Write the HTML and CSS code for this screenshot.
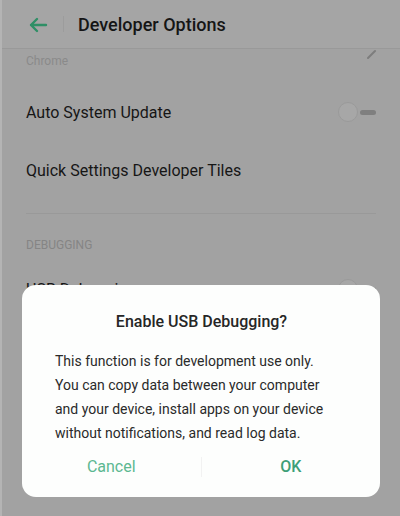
FILE: index.html
```html
<!DOCTYPE html>
<html lang="en">
<head>
    <meta charset="UTF-8">
    <meta name="viewport" content="width=device-width, initial-scale=1.0">
    <title>Developer Options</title>
    <link rel="stylesheet" href="styles.css">
</head>
<body>

    <div class="screen">

        <!-- Top bar -->
        <div class="topbar">
            <svg class="back" width="20" height="16" viewBox="0 0 20 16">
                <path d="M18 8H3M9 2L3 8l6 6" fill="none" stroke="#2f8f66" stroke-width="2.4" stroke-linecap="round" stroke-linejoin="round"/>
            </svg>
            <span class="bar-sep"></span>
            <h1>Developer Options</h1>
        </div>

        <!-- Settings list (dimmed behind the dialog) -->
        <div class="list">
            <div class="row-sub">
                <span class="sub">Chrome</span>
                <svg class="edit" width="10" height="10" viewBox="0 0 10 10">
                    <path d="M1 9L8 2" stroke="#7d7d7d" stroke-width="2" stroke-linecap="round"/>
                </svg>
            </div>
            <div class="row">
                <span>Auto System Update</span>
                <span class="toggle"><span class="knob"></span><span class="track"></span></span>
            </div>
            <div class="row">
                <span>Quick Settings Developer Tiles</span>
            </div>
            <div class="divider"></div>
            <div class="section">DEBUGGING</div>
            <div class="row">
                <span>USB Debugging</span>
                <span class="toggle"><span class="knob"></span><span class="track"></span></span>
            </div>
        </div>

        <!-- Dialog -->
        <div class="dialog">
            <h2>Enable USB Debugging?</h2>
            <p>This function is for development use only. You can copy data between your computer and your device, install apps on your device without notifications, and read log data.</p>
            <div class="actions">
                <button class="cancel">Cancel</button>
                <span class="btn-sep"></span>
                <button class="ok">OK</button>
            </div>
        </div>

    </div>

</body>
</html>
```

FILE: styles.css
```css
body {
    margin: 0;
    font-family: Roboto, "Noto Sans", Arial, sans-serif;
    background-color: #a2a2a2;
}

.screen {
    position: relative;
    width: 400px;
    height: 516px;
    overflow: hidden;
    background-color: #a2a2a2;
    border-left: 2px solid #b4b4b4;
    box-sizing: border-box;
}

.topbar {
    height: 48px;
    display: flex;
    align-items: center;
    padding-left: 26px;
    background-color: #a5a5a5;
    border-bottom: 1px solid #999;
}

.back {
    margin-top: 1px;
}

.bar-sep {
    width: 1px;
    height: 16px;
    background-color: #9c9c9c;
    margin: 0 14px 0 15px;
}

h1 {
    margin: 0;
    font-size: 18px;
    font-weight: 500;
    color: #151515;
}

.list {
    padding: 0 24px;
}

.row-sub {
    display: flex;
    justify-content: space-between;
    align-items: flex-start;
    height: 34px;
}

.sub {
    font-size: 12px;
    color: #8a8a8a;
    margin-top: 5px;
}

.edit {
    margin-top: 0;
    margin-right: -1px;
}

.row {
    height: 58px;
    display: flex;
    justify-content: space-between;
    align-items: center;
    font-size: 16px;
    color: #161616;
}

.toggle {
    display: flex;
    align-items: center;
}

.knob {
    width: 20px;
    height: 20px;
    border-radius: 50%;
    border: 1px solid #9a9a9a;
    background-color: #a7a7a7;
    box-sizing: border-box;
}

.track {
    width: 16px;
    height: 5px;
    border-radius: 3px;
    background-color: #7f7f7f;
    margin-left: 2px;
}

.divider {
    height: 1px;
    background-color: #999;
    margin-top: 14px;
}

.section {
    font-size: 12px;
    color: #858585;
    margin-top: 24px;
    height: 22px;
}

.dialog {
    position: absolute;
    left: 20px;
    top: 285px;
    width: 358px;
    height: 212px;
    background-color: #fdfefd;
    border-radius: 14px;
    box-sizing: border-box;
    padding: 27px 32px 0 33px;
}

h2 {
    margin: 0;
    text-align: center;
    font-size: 16px;
    font-weight: 500;
    color: #262626;
}

p {
    margin: 18px 0 0 0;
    max-width: 284px;
    font-size: 14px;
    line-height: 24px;
    color: #2a2a2a;
}

.actions {
    display: flex;
    align-items: center;
    margin-top: 4px;
    margin-left: -33px;
    margin-right: -32px;
}

.actions button {
    flex: 1;
    border: none;
    background: none;
    font-family: inherit;
    font-size: 16px;
    padding: 8px 0;
    cursor: pointer;
}

.cancel {
    color: #5cb891;
}

.ok {
    color: #3d9f78;
    font-weight: 500;
}

.btn-sep {
    width: 1px;
    height: 20px;
    background-color: #f2f2f2;
}
```
